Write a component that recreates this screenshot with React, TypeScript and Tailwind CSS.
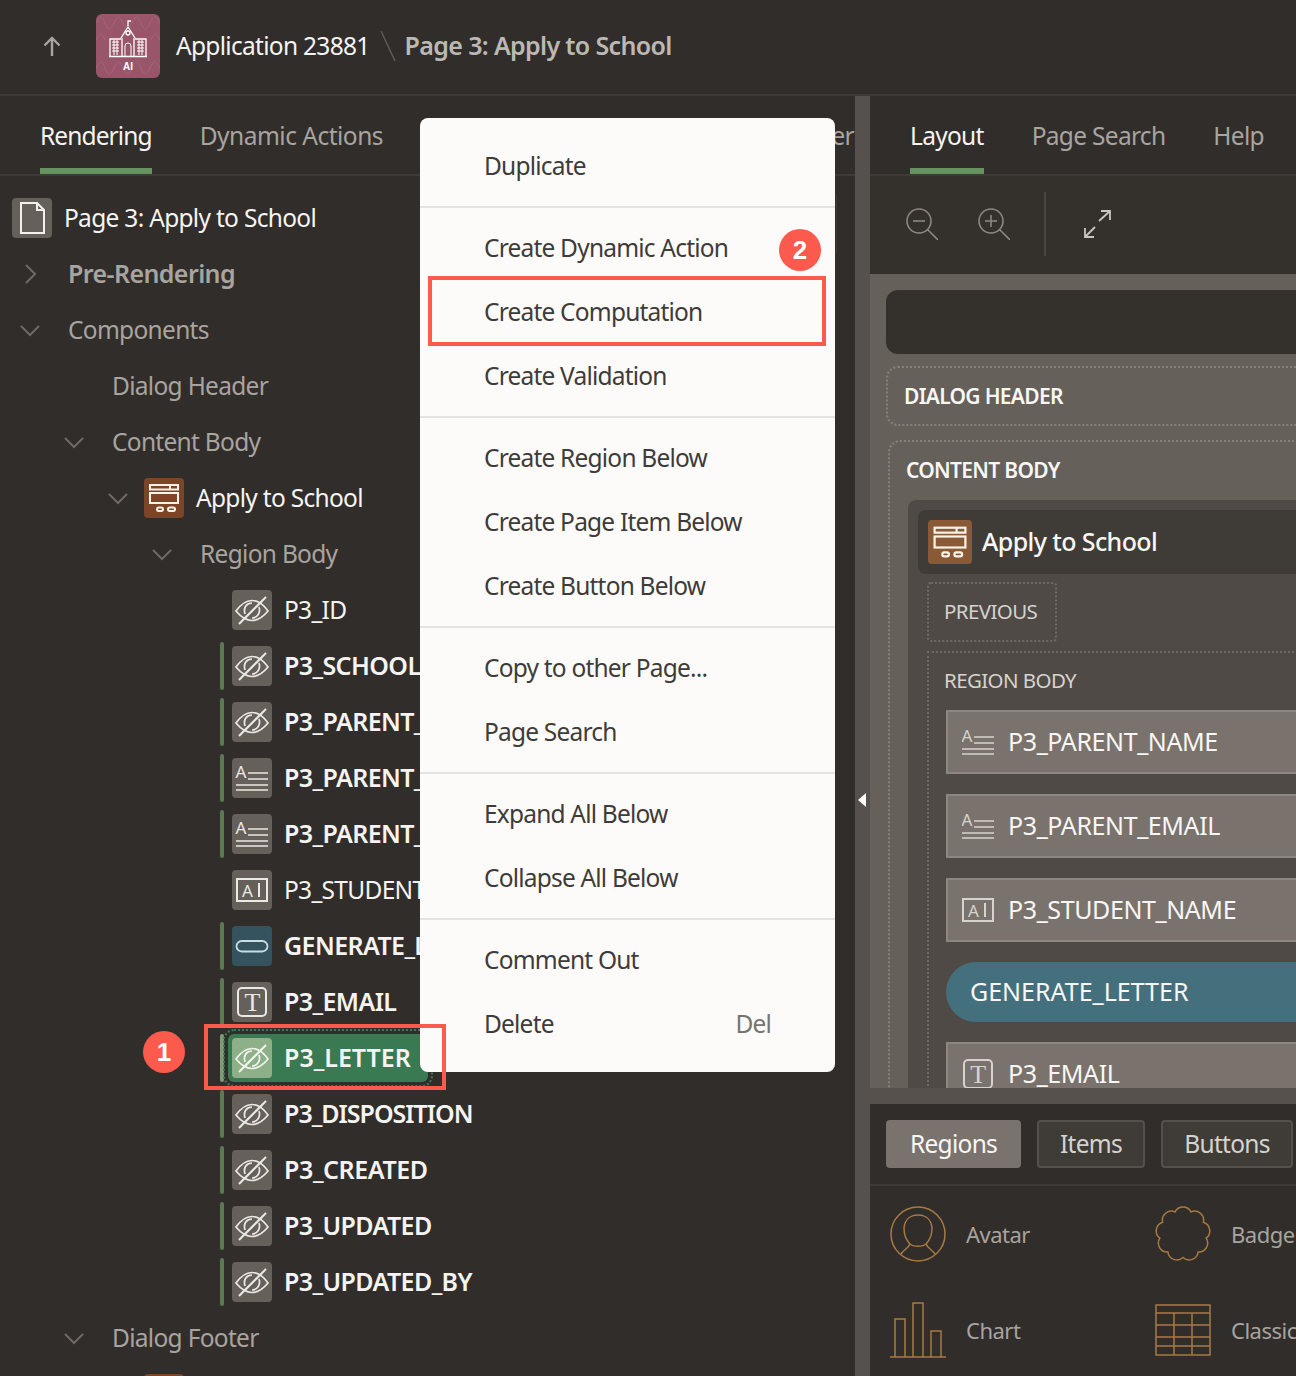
import React from 'react';

const sans = "font-['Noto_Sans',sans-serif]";

function EyeOff({ className = 'text-[#ebe9e6]' }: { className?: string }) {
  return (
    <svg viewBox="0 0 40 40" className={`w-10 h-10 ${className}`} fill="none" stroke="currentColor" strokeWidth="1.7">
      <path d="M4 21C9 14 14 10.500 20 10.500S31 14 36 21C31 27 26 30.500 20 30.500S9 27 4 21Z" />
      <path d="M13 24C11 17 15 13 20 13M27 17C29 23 25 28 20 28" />
      <path d="M7 34L34 7" strokeWidth="2" />
    </svg>
  );
}

function TextLines({ size = 'w-10 h-10', color = 'text-[#ebe9e6]', box = '0 0 40 40' }: { size?: string; color?: string; box?: string }) {
  return (
    <svg viewBox={box} className={`${size} ${color}`} fill="none" stroke="currentColor" strokeWidth="1.6">
      <text x="3.500" y="20" fontSize="17" fill="currentColor" stroke="none" fontFamily="Noto Sans">A</text>
      <path d="M16 15H36M16 21H36M4 27H36M4 32H36" />
    </svg>
  );
}

function TextField({ size = 'w-10 h-10', color = 'text-[#ebe9e6]', box = '0 0 40 40' }: { size?: string; color?: string; box?: string }) {
  return (
    <svg viewBox={box} className={`${size} ${color}`} fill="none" stroke="currentColor" strokeWidth="2">
      <rect x="5" y="9" width="30" height="22" />
      <text x="10" y="26.500" fontSize="17" fill="currentColor" stroke="none" fontFamily="Noto Sans">A</text>
      <path d="M27 13V27" />
    </svg>
  );
}

function SerifT({ size = 'w-10 h-10', color = 'text-[#ebe9e6]', box = '0 0 40 40' }: { size?: string; color?: string; box?: string }) {
  return (
    <svg viewBox={box} className={`${size} ${color}`} fill="none" stroke="currentColor" strokeWidth="2">
      <rect x="6" y="6" width="28" height="28" rx="4" />
      <text x="20" y="29" fontSize="26" textAnchor="middle" fill="currentColor" stroke="none" fontFamily="Liberation Serif">T</text>
    </svg>
  );
}

function ButtonGlyph() {
  return (
    <svg viewBox="0 0 40 40" className="w-10 h-10 text-[#c8dde3]" fill="none" stroke="currentColor" strokeWidth="1.8">
      <rect x="4.500" y="15" width="31" height="10.500" rx="5.200" />
    </svg>
  );
}

function RegionGlyph({ size = 'w-10 h-10' }: { size?: string }) {
  return (
    <svg viewBox="0 0 40 40" className={`${size} text-[#fbf3e8]`} fill="none" stroke="currentColor" strokeWidth="2">
      <rect x="6" y="7" width="28" height="4.500" />
      <path d="M26 7V11.500" />
      <rect x="6" y="15" width="28" height="10" />
      <rect x="13" y="29.500" width="6" height="3.500" rx="1.750" />
      <rect x="24" y="29.500" width="7" height="3.500" rx="1.750" />
    </svg>
  );
}

function PageGlyph() {
  return (
    <svg viewBox="0 0 40 40" className="w-10 h-10 text-[#f3f1ee]" fill="none" stroke="currentColor" strokeWidth="2">
      <path d="M9 5H25L32 12V35H9Z" />
      <path d="M25 5V12H32" />
    </svg>
  );
}

function Chevron({ open }: { open: boolean }) {
  return (
    <svg viewBox="0 0 20 20" className="w-5 h-5 text-[#6f6a65]" fill="none" stroke="currentColor" strokeWidth="2">
      <path d={open ? 'M1 6L10 15L19 6' : 'M6 1L15 10L6 19'} />
    </svg>
  );
}

function Logo() {
  return (
    <div className="w-16 h-16 rounded-md bg-[#99566b] shrink-0">
      <svg viewBox="0 0 64 64" className="w-16 h-16" fill="none" stroke="#fff" strokeWidth="1.300">
        <path d="M0 9C4 1 6 1 9 9S14 17 18 9 23 1 27 9 32 17 36 9 41 1 45 9 50 17 54 9 60 1 64 9M0 26C4 18 6 18 9 26M55 26C58 18 61 18 64 26M0 54C4 46 6 46 9 54S14 62 18 54 23 46 27 54 32 62 36 54 41 46 45 54 50 62 54 54 60 46 64 54" stroke="#a8677b" strokeWidth="1" />
        <path d="M32 12V7H35M25 24L32 13L39 24M26 24V42M38 24V42M14 42V25H25M39 25H50V42M13 42.500H51" />
        <circle cx="32" cy="19" r="2" />
        <path d="M29 42V32A3 3 0 0 1 35 32V42M16 28H23M16 31H23M16 34H23M16 37H23M41 28H48M41 31H48M41 34H48M41 37H48M18 26V41M21 26V41M43 26V41M46 26V41" strokeWidth="1" />
        <text x="32" y="56" fontSize="10" fontWeight="700" textAnchor="middle" fill="#fff" stroke="none" fontFamily="Liberation Sans">AI</text>
      </svg>
    </div>
  );
}

function Tab({ label, active = false, tracking = 'tracking-[-0.7px]' }: { label: string; active?: boolean; tracking?: string }) {
  return (
    <div className={`h-20 flex items-center relative text-[24.5px] ${tracking} ${active ? 'text-[#f5f4f2]' : 'text-[#a8a4a0]'}`}>
      {label}
      {active && <div className="absolute left-0 right-0 bottom-[2px] h-[6px] bg-[#669260]" />}
    </div>
  );
}

type ItemProps = { label: string; icon: React.ReactNode; bar?: boolean; bold?: boolean; tile?: string; tracking?: string };

function TreeItem({ label, icon, bar = true, bold = false, tile = 'bg-[#65605a]', tracking = 'tracking-[-0.6px]' }: ItemProps) {
  return (
    <div className="h-14 flex items-center pl-[220px]">
      <div className={`w-1 h-12 rounded-sm mr-2 ${bar ? 'bg-[#5d7a53]' : ''}`} />
      <div className={`w-10 h-10 rounded ${tile} shrink-0`}>{icon}</div>
      <span className={`ml-3 whitespace-nowrap text-[#f5f4f2] ${tracking} ${bold ? 'text-[25px] font-semibold' : 'text-[24.5px]'}`}>{label}</span>
    </div>
  );
}

function Tree() {
  return (
    <div className="pt-[14px] text-[24.5px] tracking-[-0.7px]">
      <div className="h-14 flex items-center pl-3 text-[#f5f4f2]">
        <div className="w-10 h-10 rounded bg-[#65605a] mr-3"><PageGlyph /></div>
        Page 3: Apply to School
      </div>
      <div className="h-14 flex items-center pl-5 text-[25px] tracking-[-0.6px] text-[#a8a4a0] font-semibold">
        <div className="w-12"><Chevron open={false} /></div>Pre-Rendering
      </div>
      <div className="h-14 flex items-center pl-5 text-[#a8a4a0]">
        <div className="w-12"><Chevron open /></div>Components
      </div>
      <div className="h-14 flex items-center pl-[112px] text-[#a8a4a0]">Dialog Header</div>
      <div className="h-14 flex items-center pl-16 text-[#a8a4a0]">
        <div className="w-12"><Chevron open /></div>Content Body
      </div>
      <div className="h-14 flex items-center pl-[108px] text-[#f5f4f2]">
        <div className="w-9"><Chevron open /></div>
        <div className="w-10 h-10 rounded bg-[#7d4527] mr-3"><RegionGlyph /></div>
        Apply to School
      </div>
      <div className="h-14 flex items-center pl-[152px] text-[#a8a4a0]">
        <div className="w-12"><Chevron open /></div>Region Body
      </div>
      <TreeItem label="P3_ID" icon={<EyeOff />} bar={false} tracking="tracking-[-0.7px]" />
      <TreeItem label="P3_SCHOOL_NAME" icon={<EyeOff />} bold />
      <TreeItem label="P3_PARENT_ID" icon={<EyeOff />} bold />
      <TreeItem label="P3_PARENT_NAME" icon={<TextLines />} bold />
      <TreeItem label="P3_PARENT_EMAIL" icon={<TextLines />} bold />
      <TreeItem label="P3_STUDENT_NAME" icon={<TextField />} bar={false} tracking="tracking-[-0.7px]" />
      <TreeItem label="GENERATE_LETTER" icon={<ButtonGlyph />} tile="bg-[#35535e]" bold />
      <TreeItem label="P3_EMAIL" icon={<SerifT />} bold />
      <div className="h-14 flex items-center pl-[220px]">
        <div className="w-1 h-12 rounded-sm mr-1 bg-[#7c9c74]" />
        <div className="w-[200px] h-12 rounded-md bg-[#3a7a52] flex items-center pl-1 outline-2 outline-dotted outline-offset-[3px] outline-[#3a7a52]">
          <div className="w-10 h-10 rounded bg-[#8db088] shrink-0"><EyeOff className="text-[#f2f5ef]" /></div>
          <span className="ml-3 text-[25px] tracking-[0px] text-[#f5f4f2] font-semibold">P3_LETTER</span>
        </div>
      </div>
      <TreeItem label="P3_DISPOSITION" icon={<EyeOff />} bold tracking="tracking-[-1px]" />
      <TreeItem label="P3_CREATED" icon={<EyeOff />} bold tracking="tracking-[-0.4px]" />
      <TreeItem label="P3_UPDATED" icon={<EyeOff />} bold />
      <TreeItem label="P3_UPDATED_BY" icon={<EyeOff />} bold />
      <div className="h-14 flex items-center pl-16 text-[#a8a4a0]">
        <div className="w-12"><Chevron open /></div>Dialog Footer
      </div>
      <div className="h-14 flex items-start pl-[144px]">
        <div className="w-10 h-10 rounded bg-[#7d4527] mt-2" />
      </div>
    </div>
  );
}

function CanvasItem({ label, icon }: { label: string; icon: React.ReactNode }) {
  return (
    <div className="h-16 w-[500px] bg-[#7a736d] border-2 border-[#8d8781] flex items-center pl-[14px] text-[#f8f7f5] text-[25px] tracking-[-0.4px] shrink-0">
      <div className="w-8 h-8 mr-[14px] shrink-0">{icon}</div>
      {label}
    </div>
  );
}

const tightBox = '4 4 32 32';

function Canvas() {
  return (
    <div className="h-[814px] bg-[#66605b] overflow-hidden pt-4 pl-4">
      <div className="w-[500px] h-16 bg-[#34302c] rounded-xl" />
      <div className="w-[500px] h-[60px] mt-3 pt-[1px] rounded-xl border-2 border-dotted border-[#85807a] flex items-center pl-4 text-[21px] font-semibold tracking-[-0.7px] text-[#f8f7f5]">DIALOG HEADER</div>
      <div className="w-[500px] mt-[14px] ml-[2px] rounded-t-xl border-2 border-b-0 border-dotted border-[#85807a] pl-[18px]">
        <div className="h-[58px] ml-[-2px] flex items-center text-[21px] font-semibold tracking-[-0.7px] text-[#f8f7f5]">CONTENT BODY</div>
        <div className="bg-[#4f4a45] pl-[10px] pt-[10px] rounded-tl-lg h-[700px]">
          <div className="h-16 bg-[#3f3c37] rounded-l-lg flex items-center pl-[10px] text-[25px] font-medium tracking-[-0.6px] text-[#f8f7f5]">
            <div className="w-11 h-11 rounded bg-[#8a5a36] mr-[10px]"><RegionGlyph size="w-11 h-11" /></div>
            Apply to School
          </div>
          <div className="w-[130px] h-[60px] mt-2 ml-[9px] pb-[2px] border-2 border-dotted border-[#6e6963] rounded flex items-center pl-[15px] text-[20.5px] tracking-[-0.6px] text-[#d6d3cf]">PREVIOUS</div>
          <div className="mt-[9px] ml-[9px] border-2 border-r-0 border-b-0 border-dotted border-[#6e6963] pl-[15px]">
            <div className="h-[57px] pb-[2px] flex items-center text-[20.5px] tracking-[-0.6px] text-[#d6d3cf]">REGION BODY</div>
            <div className="flex flex-col gap-5 ml-[2px]">
              <CanvasItem label="P3_PARENT_NAME" icon={<TextLines size="w-8 h-8" color="text-[#d6d3cf]" box={tightBox} />} />
              <CanvasItem label="P3_PARENT_EMAIL" icon={<TextLines size="w-8 h-8" color="text-[#d6d3cf]" box={tightBox} />} />
              <CanvasItem label="P3_STUDENT_NAME" icon={<TextField size="w-8 h-8" color="text-[#d6d3cf]" box={tightBox} />} />
              <div className="h-[60px] w-[500px] rounded-l-full bg-[#44707d] flex items-center pl-6 text-[25px] tracking-[0px] text-[#f8f7f5]">GENERATE_LETTER</div>
              <CanvasItem label="P3_EMAIL" icon={<SerifT size="w-8 h-8" color="text-[#d6d3cf]" box={tightBox} />} />
            </div>
          </div>
        </div>
      </div>
    </div>
  );
}

function Magnifier({ plus }: { plus: boolean }) {
  return (
    <svg viewBox="0 0 32 32" className="w-8 h-8 text-[#8c8782]" fill="none" stroke="currentColor" strokeWidth="1.600">
      <circle cx="13" cy="13" r="12" />
      <path d="M21.500 21.500L32 32" />
      <path d="M7 13H19" />
      {plus && <path d="M13 7V19" />}
    </svg>
  );
}

function Expand() {
  return (
    <svg viewBox="0 0 28 28" className="w-7 h-7 text-[#c9c6c2]" fill="none" stroke="currentColor" strokeWidth="1.800">
      <path d="M16 11L27 1M18 1H27V10M12 17L2 27M2 18V27H11" />
    </svg>
  );
}

// scalloped outline of the Badge tile
function scallopPath() {
  const lobes = 9;
  const pts = Array.from({ length: lobes }, (_, i) => {
    const a = (i / lobes) * Math.PI * 2 - Math.PI / 2 - Math.PI / lobes;
    return `${(28 + 23.5 * Math.cos(a)).toFixed(2)} ${(28 + 23.5 * Math.sin(a)).toFixed(2)}`;
  });
  return `M${pts[0]} ` + pts.slice(1).concat(pts[0]).map((p) => `A9 9 0 0 1 ${p}`).join(' ') + 'Z';
}

function Gallery() {
  return (
    <div className="grid grid-cols-[265px_1fr] gap-y-10 pl-5 pt-5 text-[22px] tracking-[-0.5px] text-[#a8a4a0]">
      <div className="flex items-center h-14 gap-5 whitespace-nowrap">
        <svg viewBox="0 0 56 56" className="w-14 h-14 shrink-0 text-[#a67a43]" fill="none" stroke="currentColor" strokeWidth="1.500">
          <circle cx="28" cy="28" r="27" />
          <path d="M20 38C15 33 14 27 14 22C15 12 22 9 28 9S41 12 42 22C42 27 41 33 36 38C33 41 23 41 20 38Z" />
          <path d="M20 38C18 43 13 44 11 48M36 38C38 43 43 44 45 48" />
        </svg>
        Avatar
      </div>
      <div className="flex items-center h-14 gap-5 whitespace-nowrap">
        <svg viewBox="0 0 56 56" className="w-14 h-14 shrink-0 text-[#a67a43]" fill="none" stroke="currentColor" strokeWidth="1.500">
          <path d={scallopPath()} />
        </svg>
        Badge
      </div>
      <div className="flex items-center h-14 gap-5 whitespace-nowrap">
        <svg viewBox="0 0 56 56" className="w-14 h-14 shrink-0 text-[#a67a43]" fill="none" stroke="currentColor" strokeWidth="1.500">
          <path d="M0 55H56M5 55V17H15V55M23 55V1H33V55M41 55V29H51V55" />
        </svg>
        Chart
      </div>
      <div className="flex items-center h-14 gap-5 whitespace-nowrap">
        <svg viewBox="0 0 56 56" className="w-14 h-14 shrink-0 text-[#a67a43]" fill="none" stroke="currentColor" strokeWidth="1.500">
          <rect x="1" y="3" width="54" height="50" />
          <path d="M1 11H55M1 23H55M1 35H55M1 44H55M19 11V53M37 11V53" />
        </svg>
        Classic Report
      </div>
    </div>
  );
}

function MenuItem({ label, shortcut }: { label: string; shortcut?: string }) {
  return (
    <div className="h-16 flex items-center justify-between pl-16 pr-16 text-[24.5px] tracking-[-0.8px] text-[#3e3b38]">
      {label}
      {shortcut && <span className="text-[#77736f]">{shortcut}</span>}
    </div>
  );
}

function Sep() {
  return <div className="h-[2px] my-2 bg-[#e5e3e0]" />;
}

function Badge({ n, className }: { n: number; className: string }) {
  return (
    <div className={`absolute w-[42px] h-[42px] rounded-full bg-[#fd5a4e] text-white flex items-center justify-center font-['Liberation_Sans',sans-serif] text-[26px] font-bold ${className}`}>
      {n}
    </div>
  );
}

export default function App() {
  return (
    <div className={`relative w-[1296px] h-[1376px] overflow-hidden bg-[#312d2a] ${sans}`}>
      <header className="h-[96px] border-b-2 border-[#3d3a37] flex items-center pb-[2px]">
        <div className="w-[96px] flex justify-center pl-[8px]">
          <svg viewBox="0 0 24 24" className="w-6 h-6 text-[#a8a49f]" fill="none" stroke="currentColor" strokeWidth="2.400">
            <path d="M12 22V4M4.500 11.500L12 4L19.500 11.500" />
          </svg>
        </div>
        <Logo />
        <span className="ml-4 text-[24.5px] tracking-[-0.7px] text-[#f5f4f2]">Application 23881</span>
        <svg viewBox="0 0 16 32" className="w-4 h-8 ml-[10px] text-[#5f5b57]" fill="none" stroke="currentColor" strokeWidth="1.500">
          <path d="M1 1L15 31" />
        </svg>
        <span className="ml-[9px] text-[25px] font-semibold tracking-[-0.65px] text-[#bcb8b4]">Page 3: Apply to School</span>
      </header>

      <div className="flex h-[1280px]">
        <section className="w-[855px] shrink-0 overflow-hidden">
          <div className="h-20 border-b-2 border-[#3d3a37] flex gap-12 pl-10 pr-[1px]">
            <Tab label="Rendering" active tracking="tracking-[-0.9px]" />
            <Tab label="Dynamic Actions" tracking="tracking-[-0.5px]" />
            <Tab label="Processing" />
            <div className="ml-auto"><Tab label="Page Header" /></div>
          </div>
          <Tree />
        </section>

        <div className="w-[15px] shrink-0 bg-[#56514c] pl-[3px] pt-[697px]">
          <div className="w-0 h-0 border-y-[7px] border-y-transparent border-r-[8px] border-r-white" />
        </div>

        <section className="w-[426px] shrink-0 overflow-hidden">
          <div className="h-20 border-b-2 border-[#3d3a37] flex gap-12 pl-10">
            <Tab label="Layout" active />
            <Tab label="Page Search" />
            <Tab label="Help" />
          </div>
          <div className="h-[98px] bg-[#34302c] flex items-center pl-9 pb-[2px]">
            <Magnifier plus={false} />
            <div className="ml-10"><Magnifier plus /></div>
            <div className="w-[2px] h-16 bg-[#4a4642] ml-[34px] mr-[37px]" />
            <Expand />
          </div>
          <Canvas />
          <div className="h-4 bg-[#56514c]" />
          <div className="h-[82px] border-b-2 border-[#3d3a37] flex gap-4 pl-4 pt-4 text-[24.5px] tracking-[-0.7px]">
            <div className="w-[135px] h-12 rounded bg-[#7a736d] text-[#f8f7f5] flex items-center justify-center">Regions</div>
            <div className="w-[108px] h-12 rounded border-2 border-[#54504b] bg-[#3f3c37] text-[#d6d3cf] flex items-center justify-center">Items</div>
            <div className="w-[132px] h-12 rounded border-2 border-[#54504b] bg-[#3f3c37] text-[#d6d3cf] flex items-center justify-center">Buttons</div>
          </div>
          <Gallery />
        </section>
      </div>

      <div className="absolute left-[820px] top-[192px] w-[17px] h-[64px] rounded border border-[#3d3a37]" />

      <div className="absolute left-[420px] top-[118px] w-[415px] h-[954px] rounded-lg bg-[#fcfbfa] py-4">
        <MenuItem label="Duplicate" />
        <Sep />
        <MenuItem label="Create Dynamic Action" />
        <MenuItem label="Create Computation" />
        <MenuItem label="Create Validation" />
        <Sep />
        <MenuItem label="Create Region Below" />
        <MenuItem label="Create Page Item Below" />
        <MenuItem label="Create Button Below" />
        <Sep />
        <MenuItem label="Copy to other Page..." />
        <MenuItem label="Page Search" />
        <Sep />
        <MenuItem label="Expand All Below" />
        <MenuItem label="Collapse All Below" />
        <Sep />
        <MenuItem label="Comment Out" />
        <MenuItem label="Delete" shortcut="Del" />
      </div>

      <div className="absolute left-[428px] top-[276px] w-[398px] h-[70px] border-4 border-[#fd5a4e]" />
      <div className="absolute left-[204px] top-[1024px] w-[242px] h-[66px] border-4 border-[#fd5a4e]" />
      <Badge n={2} className="left-[779px] top-[229px]" />
      <Badge n={1} className="left-[143px] top-[1031px]" />
    </div>
  );
}
